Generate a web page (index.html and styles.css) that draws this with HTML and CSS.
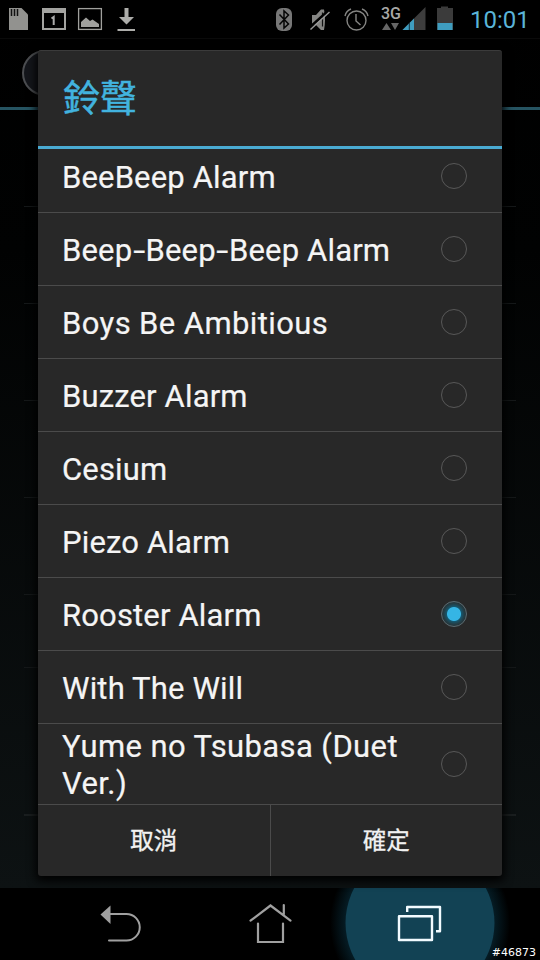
FILE: index.html
```html
<!DOCTYPE html>
<html lang="zh-Hant">
<head>
<meta charset="utf-8">
<title>鈴聲</title>
<link rel="stylesheet" href="styles.css">
</head>
<body>
<div class="screen">
  <header class="status">
    <svg class="status-icons" width="140" height="38" viewBox="0 0 140 38">
      <path d="M9 8H21.500L28 14.500V30H9Z" fill="#92928f"/>
      <path d="M11.500 9v7M14.500 9v7M17.500 9v7" stroke="#111" stroke-width="1.500"/>
      <path d="M42 8H66V30H42ZM44 13V28H64V13Z" fill="#a3a3a0" fill-rule="evenodd"/>
      <path d="M51.500 18.500L53.700 17V25" fill="none" stroke="#aaa" stroke-width="2"/>
      <rect x="78.600" y="8.600" width="22.800" height="20.800" fill="none" stroke="#a0a09d" stroke-width="1.300"/>
      <path d="M81 27V22L86 17.500L90 21L92.500 19.500L99 24V27Z" fill="#a0a09d"/>
      <path d="M124.500 8h4v9h5.500l-7.500 7.500l-7.500-7.500h5.500ZM117.500 29h17.500v2h-17.500Z" fill="#adadaa"/>
    </svg>
    <svg class="status-icons" width="110" height="38" viewBox="270 0 110 38">
      <rect x="276" y="8" width="16" height="23" rx="6" fill="#777"/>
      <path d="M279.500 14.500L288.500 24L284 28V11L288.500 15L279.500 24.500" fill="none" stroke="#050505" stroke-width="1.500"/>
      <path d="M312 15h4l5-5.500h3q2 10 0 20.500h-3L316 25h-4Z" fill="#858583"/>
      <path d="M322.500 12.500v14" stroke="#111" stroke-width="1.200"/>
      <path d="M309 28L328.500 10.500" stroke="#000" stroke-width="2.500"/>
      <path d="M310.500 29.500L329.500 12" stroke="#999" stroke-width="1.400"/>
      <g fill="none" stroke="#858583" stroke-width="1.400"><circle cx="356.500" cy="20.500" r="9.500"/><path d="M356 14v7l4.500 4M345 16q1-5 6-7M368 16q-1-5-6-7"/></g>
    </svg>
    <div class="network">
      <span class="network-type">3G</span>
      <svg width="20" height="9" viewBox="0 0 20 9"><path d="M1 8L5.500 1L10 8ZM10 1h8l-4 7Z" fill="#666"/></svg>
    </div>
    <svg class="status-icons" width="54" height="38" viewBox="402 0 54 38">
      <path d="M402.500 30L425.500 7V30Z" fill="#3d3d3d"/>
      <path d="M402.500 30L414 18.500V30Z" fill="#3f9dc0"/>
      <path d="M409.300 23v7" stroke="#14303a"/>
      <path d="M437 8h4V6.500h7V8h5V30h-16Z" fill="#3b3b3b"/>
      <rect x="437.500" y="23" width="15" height="7" fill="#3f9dc0"/>
    </svg>
    <time class="clock">10:01</time>
  </header>
  <div class="action-bar"><span class="knob"></span></div>
  <main class="settings">
    <div class="setting"></div><div class="setting"></div><div class="setting"></div>
    <div class="setting"></div><div class="setting"></div><div class="setting short"></div><div class="setting last"></div>
  </main>
  <nav class="nav">
    <svg width="540" height="72" viewBox="0 888 540 72">
      <defs><radialGradient id="halo"><stop offset=".8" stop-color="#06202a"/><stop offset="1" stop-color="#000"/></radialGradient></defs>
      <circle cx="420" cy="923" r="90" fill="url(#halo)"/>
      <circle cx="420" cy="923" r="74.500" fill="#124254"/>
      <path d="M110.500 905.500V924L100.500 914.500Z" fill="#a0a0a0"/>
      <path d="M110 914H126.500a13.200 13.200 0 0 1 0 26.500H109" fill="none" stroke="#a0a0a0" stroke-width="2" stroke-linecap="round"/>
      <path d="M250.500 920.700L270.500 905.500L290.500 920.700M283.800 905v9.500M258 923.500V942H283V923.500" fill="none" stroke="#a0a0a0" stroke-width="2.200" stroke-linecap="round"/>
      <path d="M399 916.200H432V940H399ZM407.200 912V907H440V931.300H436" fill="none" stroke="#f2fbff" stroke-width="2.400" stroke-linejoin="round"/>
    </svg>
    <span class="stamp">#46873</span>
  </nav>
  <section class="dialog">
    <h1 class="title">鈴聲</h1>
    <ul class="list">
      <li class="item"><span>BeeBeep Alarm</span><i class="radio"></i></li>
      <li class="item"><span>Beep<b class="hyphen">-</b>Beep<b class="hyphen">-</b>Beep Alarm</span><i class="radio"></i></li>
      <li class="item"><span class="loose">Boys Be Ambitious</span><i class="radio"></i></li>
      <li class="item"><span>Buzzer Alarm</span><i class="radio"></i></li>
      <li class="item"><span>Cesium</span><i class="radio"></i></li>
      <li class="item"><span>Piezo Alarm</span><i class="radio"></i></li>
      <li class="item"><span>Rooster Alarm</span><i class="radio checked"></i></li>
      <li class="item"><span>With The Will</span><i class="radio"></i></li>
      <li class="item double"><span class="loose">Yume no Tsubasa (Duet Ver.)</span><i class="radio"></i></li>
    </ul>
    <div class="buttons"><button>取消</button><button>確定</button></div>
  </section>
</div>
</body>
</html>
```
FILE: styles.css
```css
* { box-sizing: border-box; }
body { margin: 0; background: #000; font-family: Roboto, "Noto Sans CJK TC", sans-serif; }
.screen { position: relative; width: 540px; height: 960px; overflow: hidden; display: flex; flex-direction: column; background: linear-gradient(#000 0, #010202 250px, #0d1213 888px); }
.status { height: 38px; display: flex; background: #000; flex: none; }
.status-icons { display: block; flex: none; }
.status-icons + .status-icons { margin-left: 130px; }
.network { width: 22px; padding: 5px 0 0 1px; display: flex; flex-direction: column; }
.network-type { font-size: 16px; line-height: 17px; font-weight: 500; color: #a9a9a7; }
.clock { margin-left: 14px; padding-top: 5px; font-size: 24px; line-height: 30px; color: #5ab4d8; white-space: nowrap; }
.action-bar { height: 72px; flex: none; border-top: 1px solid #0a0a0a; border-bottom: 3px solid #265462; padding: 11px 22px; }
.knob { display: block; width: 46px; height: 46px; border: 2px solid #4b4d50; border-radius: 50%; background: #14161b; }
.settings { flex: 1; padding: 0 24px; }
.setting { height: 97px; border-bottom: 1px solid #151819; }
.setting.short { height: 73px; }
.setting.last { height: 148px; border-bottom: 2px solid #1a1e1f; }
.nav { position: relative; height: 72px; flex: none; background: #000; }
.nav svg { display: block; }
.stamp { position: absolute; right: 4px; bottom: 0; font: 11px/14px "DejaVu Sans", sans-serif; color: #fff; }
.dialog { position: absolute; left: 38px; top: 50px; width: 464px; height: 826px; display: flex; flex-direction: column; background: #282828; border-radius: 3px; border-top: 1px solid #3b3b3b; box-shadow: 0 3px 10px 2px #000; }
.title { margin: 0; height: 98px; flex: none; border-bottom: 3px solid #4aabd3; padding: 22px 25px 0; font-size: 37px; line-height: 54px; font-weight: 400; color: #42b3df; -webkit-text-stroke: 0.5px #42b3df; }
.list { margin: 0; padding: 0; list-style: none; }
.item { height: 73px; padding: 1px 35px 0 24px; display: flex; align-items: center; justify-content: space-between; border-bottom: 1px solid #4b4b4b; color: #f5f5f5; font-size: 31px; line-height: 37px; letter-spacing: 0.15px; -webkit-text-stroke: 0.2px #f5f5f5; }
.item:first-child { height: 64px; align-items: flex-start; padding-top: 10px; }
.item:first-child .radio { margin-top: 4px; }
.item.double { height: 81px; }
.item span { max-width: 355px; padding-top: 1px; }
.item:first-child span { padding-top: 0; }
.item .loose { letter-spacing: 0.4px; }
.hyphen { display: inline-block; margin: 0 2.300px; font-weight: 400; transform: scaleX(1.4); }
.radio { width: 26px; height: 26px; flex: none; margin-top: -2px; border: 1.500px solid #585858; border-radius: 50%; }
.checked { border-color: #5b6c72; background: radial-gradient(circle, #35b5e5 0 6.500px, #17566c 7.500px, #234049 10px, #262d30 13px); }
.buttons { flex: 1; display: flex; }
.buttons button { flex: 1; border: 0; padding: 0 0 3px; background: none; color: #f2f2f2; font: 23.500px "Noto Sans CJK TC", sans-serif; -webkit-text-stroke: 0.3px #f2f2f2; }
.buttons button + button { border-left: 1px solid #4b4b4b; }
```
